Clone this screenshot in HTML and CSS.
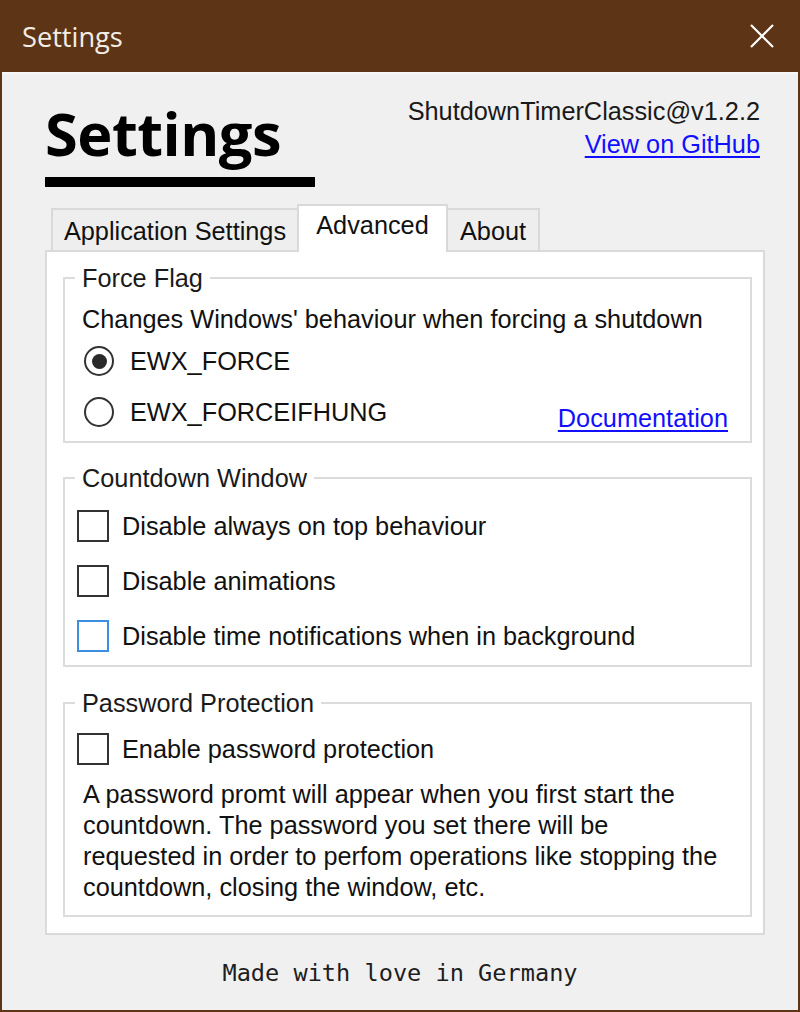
FILE: index.html
```html
<!DOCTYPE html>
<html lang="en">
<head>
<meta charset="utf-8">
<title>Settings</title>
<link rel="stylesheet" href="styles.css">
</head>
<body>
<div class="window">
  <div class="titlebar">
    <span class="title">Settings</span>
    <svg class="close" width="24" height="24" viewBox="0 0 24 24" aria-hidden="true">
      <path d="M1 1 L23 23 M23 1 L1 23" stroke="#ffffff" stroke-width="2.2" fill="none"/>
    </svg>
  </div>
  <div class="client">
    <div class="header">
      <div class="brand">
        <h1 class="heading">Settings</h1>
        <div class="rule"></div>
      </div>
      <div class="meta">
        <div class="version">ShutdownTimerClassic@v1.2.2</div>
        <a class="link" href="#">View on GitHub</a>
      </div>
    </div>
    <div class="tabs">
      <div class="tab tab-app">Application Settings</div>
      <div class="tab tab-adv active">Advanced</div>
      <div class="tab tab-about">About</div>
    </div>
    <div class="panel">
      <fieldset class="group group-force">
        <legend>Force Flag</legend>
        <div class="desc">Changes Windows' behaviour when forcing a shutdown</div>
        <div class="row radio-row first">
          <span class="radio checked"></span>
          <span class="label-r">EWX_FORCE</span>
        </div>
        <div class="row radio-row second">
          <span class="radio"></span>
          <span class="label-r">EWX_FORCEIFHUNG</span>
          <a class="link doc" href="#">Documentation</a>
        </div>
      </fieldset>
      <fieldset class="group group-count">
        <legend>Countdown Window</legend>
        <div class="row check-row first">
          <span class="check"></span>
          <span class="label-c">Disable always on top behaviour</span>
        </div>
        <div class="row check-row">
          <span class="check"></span>
          <span class="label-c">Disable animations</span>
        </div>
        <div class="row check-row">
          <span class="check hover"></span>
          <span class="label-c">Disable time notifications when in background</span>
        </div>
      </fieldset>
      <fieldset class="group group-pass">
        <legend>Password Protection</legend>
        <div class="row check-row first">
          <span class="check"></span>
          <span class="label-c">Enable password protection</span>
        </div>
        <p class="note">A password promt will appear when you first start the<br>countdown. The password you set there will be<br>requested in order to perfom operations like stopping the<br>countdown, closing the window, etc.</p>
      </fieldset>
    </div>
    <div class="footer">Made with love in Germany</div>
  </div>
</div>
</body>
</html>
```

FILE: styles.css
```css
* { box-sizing: border-box; }

html, body {
  margin: 0;
  padding: 0;
  background: #5d3516;
}

body {
  font-family: "Liberation Sans", Arial, sans-serif;
  font-size: 25.3px;
  color: #111111;
}

.window {
  width: 800px;
  height: 1012px;
  border: 2px solid #5d3516;
  border-top: 0;
  display: flex;
  flex-direction: column;
  background: #5d3516;
}

.titlebar {
  height: 72px;
  flex: none;
  display: flex;
  align-items: center;
  justify-content: space-between;
  padding: 0 24px 0 20px;
  background: #5d3516;
}

.title {
  font-family: "Open Sans", "Noto Sans", sans-serif;
  font-size: 27.2px;
  color: #f3ede6;
  line-height: 30px;
  margin-top: 2px;
}

.close {
  display: block;
}

.client {
  flex: 1;
  background: #f0f0f0;
  border-top: 2px solid #f8f8f8;
  padding: 0 33px 0 43px;
  display: flex;
  flex-direction: column;
}

.header {
  display: flex;
  justify-content: space-between;
  align-items: flex-start;
}

.brand {
  display: flex;
  flex-direction: column;
}

.heading {
  font-family: "Open Sans", "Noto Sans", sans-serif;
  font-weight: 700;
  font-size: 59.5px;
  letter-spacing: -0.5px;
  line-height: 70px;
  margin: 24px 0 0 0;
  color: #000000;
}

.rule {
  width: 270px;
  height: 10px;
  background: #000000;
  margin-top: 9px;
}

.meta {
  margin-top: 21px;
  margin-right: 5px;
  text-align: right;
  line-height: 33px;
  display: flex;
  flex-direction: column;
  align-items: flex-end;
}

.version {
  color: #1a1a1a;
}

.link {
  color: #1010ff;
  text-decoration: underline;
  text-underline-offset: 3px;
}

.tabs {
  display: flex;
  align-items: flex-end;
  height: 46px;
  margin: 17px 0 0 6px;
}

.tab {
  height: 42px;
  border: 2px solid #d9d9d9;
  border-bottom: 0;
  background: #eeeeee;
  display: flex;
  align-items: center;
  justify-content: center;
  color: #111111;
  line-height: 26px;
  padding-top: 2px;
  white-space: nowrap;
}

.tab-app { width: 246px; border-right: 0; }
.tab-adv { width: 151px; }
.tab-about { width: 92px; border-left: 0; }

.tab.active {
  position: relative;
  height: 48px;
  margin-bottom: -2px;
  background: #ffffff;
  padding-top: 0;
  padding-bottom: 8px;
}

.panel {
  height: 685px;
  background: #ffffff;
  border: 2px solid #dadada;
  padding: 0 11px 0 16px;
  display: flex;
  flex-direction: column;
}

.group {
  margin: 0;
  min-width: 0;
  border: 2px solid #dcdcdc;
  padding: 0 12px 0 12px;
}

.group legend {
  padding: 0 7px;
  margin-left: -2px;
  line-height: 26px;
  color: #1a1a1a;
}

.group-force {
  margin-top: 13px;
  padding-top: 13px;
  padding-bottom: 14px;
}

.group-count {
  margin-top: 22px;
  padding-top: 19px;
  padding-bottom: 13px;
}

.group-pass {
  margin-top: 23px;
  padding-top: 17px;
  padding-bottom: 12px;
}

.desc {
  line-height: 30px;
  margin-left: 5px;
  white-space: nowrap;
}

.row {
  display: flex;
  align-items: center;
}

.radio-row {
  height: 30px;
  margin-left: 7px;
}

.radio-row.first { margin-top: 12px; }
.radio-row.second { margin-top: 21px; }

.radio {
  width: 30px;
  height: 30px;
  border-radius: 50%;
  border: 2px solid #333333;
  background: #ffffff;
  flex: none;
  display: flex;
  align-items: center;
  justify-content: center;
}

.radio.checked::after {
  content: "";
  width: 15px;
  height: 15px;
  border-radius: 50%;
  background: #2a2a2a;
}

.label-r {
  margin-left: 16px;
  white-space: nowrap;
}

.doc {
  margin-left: auto;
  margin-right: 10px;
  margin-top: 12px;
}

.check-row {
  height: 32px;
}

.check-row + .check-row { margin-top: 23px; }

.check {
  width: 32px;
  height: 32px;
  border: 2px solid #333333;
  background: #ffffff;
  flex: none;
}

.check.hover {
  border-color: #3d8ee0;
}

.label-c {
  margin-left: 13px;
  white-space: nowrap;
}

.note {
  margin: 14px 0 0 6px;
  line-height: 31px;
  white-space: nowrap;
}

.footer {
  font-family: "DejaVu Sans Mono", "Liberation Mono", monospace;
  font-size: 23.6px;
  line-height: 28px;
  margin-top: 24px;
  text-align: center;
  color: #1e1e1e;
  margin-left: -41px;
  margin-right: -31px;
}
```
